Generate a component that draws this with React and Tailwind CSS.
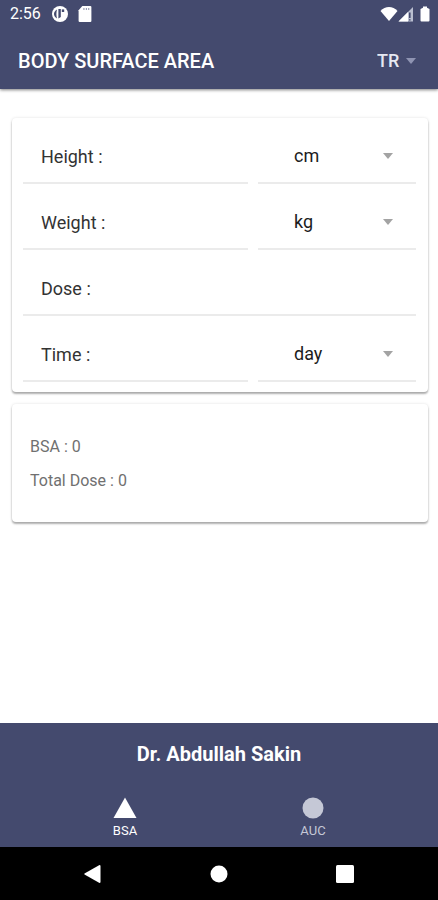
import { useState } from "react";

function Caret({ className }) {
  return (
    <svg viewBox="0 0 10 6" className={className} aria-hidden="true">
      <path d="M0 0H10L5 6Z" fill="currentColor" />
    </svg>
  );
}

function StatusBar() {
  return (
    <div className="flex h-7 items-center justify-between pr-2 pl-2.5">
      <div className="flex items-center">
        <span className="text-base leading-5">2:56</span>
        <svg viewBox="0 0 16 16" className="ml-[11px] h-4 w-4" aria-hidden="true">
          <circle cx="8" cy="8" r="8" fill="currentColor" />
          <path d="M5 3.6C2.8 5 2 6.4 2 8S3 11.4 5 12.6C4.2 9.5 4.2 6.5 5 3.6Z" fill="#444a6e" />
          <path d="M6.4 3H8.8V11L6.4 12.6Z" fill="#444a6e" />
          <path d="M9.8 3.4H12.2V6H9.8Z" fill="#444a6e" />
        </svg>
        <svg viewBox="0 0 13 15" className="ml-2.5 h-4 w-3.5" aria-hidden="true">
          <path d="M4 0H11.5Q12.5 0 12.5 1V14Q12.5 15 11.5 15H1.5Q0.5 15 0.5 14V4Z" fill="currentColor" />
          <path d="M5 2H6V3.6H5ZM7.3 2H8.3V3.6H7.3ZM9.5 2H10.5V3.6H9.5Z" fill="#6b7092" />
        </svg>
      </div>
      <div className="flex items-center">
        <svg viewBox="0 0 18 14" className="h-3.5 w-4.5" aria-hidden="true">
          <path d="M0.5 4C5 -1.2 13 -1.2 17.5 4L9 14Z" fill="currentColor" />
        </svg>
        <svg viewBox="0 0 16 15" className="h-4 w-4" aria-hidden="true">
          <path d="M15 0.5V15H0.5Z" fill="#b9bed0" />
          <path d="M10 5.5V15H0.5Z" fill="currentColor" />
          <path d="M11 6H12.6V11.5H11ZM11 12.8H12.6V14H11Z" fill="#444a6e" />
        </svg>
        <svg viewBox="0 0 10 15" className="ml-1.5 h-4 w-2.5" aria-hidden="true">
          <path d="M3 0H7V1.2L9.5 2.4V14Q9.5 15 8.5 15H1.5Q0.5 15 0.5 14V2.4L3 1.2Z" fill="currentColor" />
        </svg>
      </div>
    </div>
  );
}

function Field({ id, label, units }) {
  return (
    <div className={`grid h-[66px] gap-2.5 ${units ? "grid-cols-[225fr_158fr]" : "grid-cols-1"}`}>
      <div className="flex min-w-0 items-center gap-2 border-b-2 border-[#ebebeb] pt-3.5 pl-4.5">
        <label htmlFor={id} className="text-lg leading-6 whitespace-nowrap">
          {label} :
        </label>
        <input id={id} inputMode="decimal" className="h-8 w-full min-w-0 bg-transparent text-lg outline-none" />
      </div>
      {units && (
        <div className="relative flex min-w-0 items-center border-b-2 border-[#ebebeb] pt-3">
          <select
            aria-label={`${label} unit`}
            className="h-8 w-full appearance-none bg-transparent pl-9 text-lg leading-6 text-[#1c1c1c] outline-none"
          >
            {units.map((unit) => (
              <option key={unit}>{unit}</option>
            ))}
          </select>
          <Caret className="pointer-events-none absolute right-5.5 h-1.5 w-3 text-[#a3a3a3]" />
        </div>
      )}
    </div>
  );
}

const cardStyle =
  "mx-3 mr-2.5 rounded-sm bg-white shadow-[0_2px_2px_rgba(0,0,0,0.3),0_0_3px_rgba(0,0,0,0.12)]";

export default function App() {
  const [tab, setTab] = useState("BSA");
  return (
    <div className="flex min-h-screen flex-col bg-white font-[Roboto,sans-serif] text-[#333333]">
      <header className="bg-[#444a6e] text-white shadow-[0_1px_3px_rgba(0,0,0,0.5)]">
        <StatusBar />
        <div className="flex h-[61px] items-center justify-between pt-1 pr-5.5 pl-4.5">
          <h1 className="text-xl leading-6 font-medium">BODY SURFACE AREA</h1>
          <div className="relative flex items-center">
            <select
              aria-label="Language"
              className="h-8 appearance-none bg-transparent pr-4 text-lg leading-6 font-medium text-[#e6e8f2] outline-none"
            >
              <option>TR</option>
              <option>EN</option>
            </select>
            <Caret className="pointer-events-none absolute right-0 h-1.5 w-2.5 text-[#8f94b2]" />
          </div>
        </div>
      </header>

      <main className="flex flex-1 flex-col gap-3 pt-[29px]">
        <form className={`${cardStyle} pr-3 pb-2.5 pl-[11px]`}>
          <Field id="height" label="Height" units={["cm", "m"]} />
          <Field id="weight" label="Weight" units={["kg", "g"]} />
          <Field id="dose" label="Dose" />
          <Field id="time" label="Time" units={["day", "week"]} />
        </form>
        <section className={`${cardStyle} px-4.5 pt-6.5 pb-6 text-base leading-[34px] text-[#707070]`}>
          <p>BSA : 0</p>
          <p>Total Dose : 0</p>
        </section>
      </main>

      <footer className="bg-[#444a6e] text-white">
        <p className="pt-[19px] text-center text-xl leading-6 font-bold">Dr. Abdullah Sakin</p>
        <nav className="flex justify-center pt-[31px] pb-2 text-[13px] leading-4" aria-label="Calculators">
          <button
            type="button"
            onClick={() => setTab("BSA")}
            aria-pressed={tab === "BSA"}
            className={`flex w-47 flex-col items-center gap-1 ${tab === "BSA" ? "text-white" : "text-[#c5c8d6]"}`}
          >
            <svg viewBox="0 0 23 22" className="h-5.5 w-6" aria-hidden="true">
              <path d="M11.5 0.5L23 21H0Z" fill="currentColor" />
            </svg>
            BSA
          </button>
          <button
            type="button"
            onClick={() => setTab("AUC")}
            aria-pressed={tab === "AUC"}
            className={`flex w-47 flex-col items-center gap-1 ${tab === "AUC" ? "text-white" : "text-[#c5c8d6]"}`}
          >
            <svg viewBox="0 0 22 22" className="h-5.5 w-5.5" aria-hidden="true">
              <circle cx="11" cy="11" r="10.5" fill="currentColor" />
            </svg>
            AUC
          </button>
        </nav>
      </footer>

      <div className="flex h-[53px] items-center justify-center bg-black text-white">
        <button type="button" aria-label="Back" className="flex w-[126px] justify-center">
          <svg viewBox="0 0 18 18" className="h-4.5 w-4.5" aria-hidden="true">
            <path d="M15.5 0Q16.5 0 16.5 1V17Q16.5 18 15.5 18L0.5 9.6Q0 9 0.5 8.4Z" fill="currentColor" />
          </svg>
        </button>
        <button type="button" aria-label="Home" className="flex w-[126px] justify-center">
          <svg viewBox="0 0 18 18" className="h-4.5 w-4.5" aria-hidden="true">
            <circle cx="9" cy="9" r="8.5" fill="currentColor" />
          </svg>
        </button>
        <button type="button" aria-label="Recent apps" className="flex w-[126px] justify-center">
          <svg viewBox="0 0 18 18" className="h-4.5 w-4.5" aria-hidden="true">
            <rect width="18" height="18" rx="1.5" fill="currentColor" />
          </svg>
        </button>
      </div>
    </div>
  );
}
